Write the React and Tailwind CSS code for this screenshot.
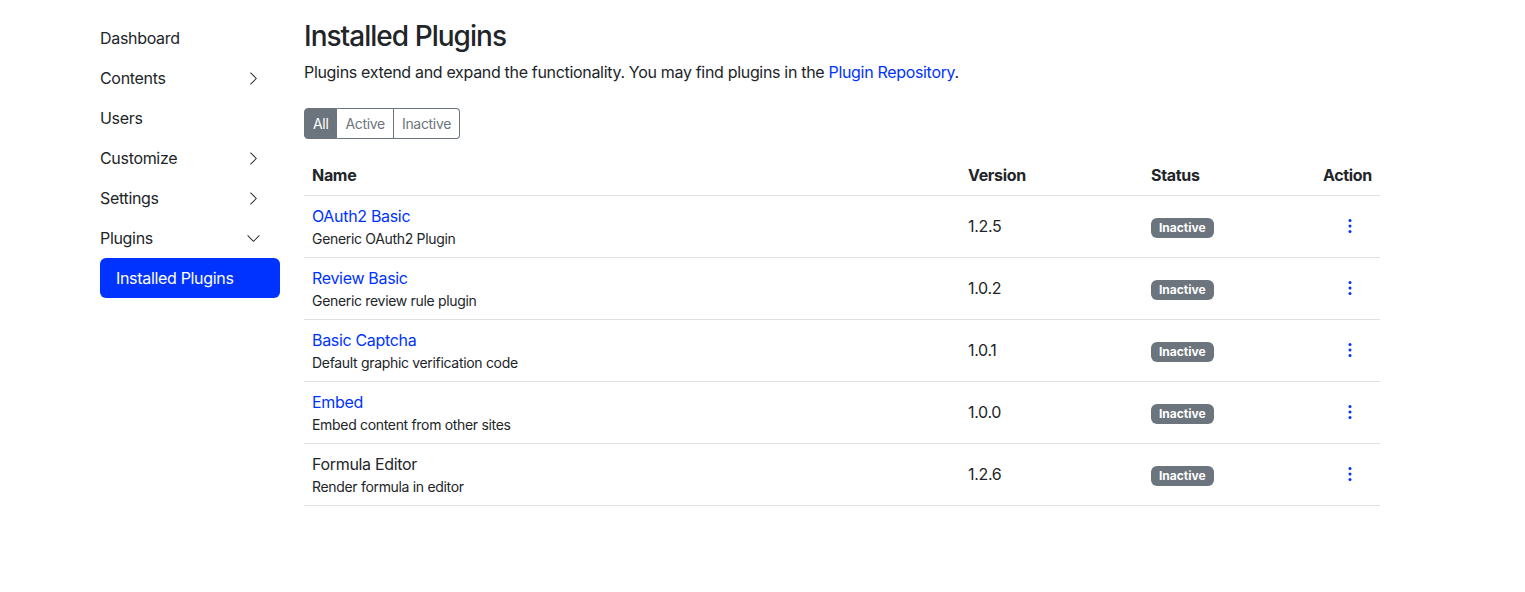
import React from 'react'

const NAV = [
  { label: 'Dashboard' },
  { label: 'Contents', chevron: 'right' },
  { label: 'Users' },
  { label: 'Customize', chevron: 'right' },
  { label: 'Settings', chevron: 'right' },
  { label: 'Plugins', chevron: 'down' },
]

const PLUGINS = [
  { name: 'OAuth2 Basic', desc: 'Generic OAuth2 Plugin', version: '1.2.5', link: true },
  { name: 'Review Basic', desc: 'Generic review rule plugin', version: '1.0.2', link: true },
  { name: 'Basic Captcha', desc: 'Default graphic verification code', version: '1.0.1', link: true },
  { name: 'Embed', desc: 'Embed content from other sites', version: '1.0.0', link: true },
  { name: 'Formula Editor', desc: 'Render formula in editor', version: '1.2.6', link: false },
]

function Chevron({ dir }) {
  return (
    <svg width="15" height="15" viewBox="0 0 16 16" fill="currentColor" className="text-[#212529]">
      {dir === 'right' ? (
        <path fillRule="evenodd" d="M4.646 1.646a.5.5 0 0 1 .708 0l6 6a.5.5 0 0 1 0 .708l-6 6a.5.5 0 0 1-.708-.708L10.293 8 4.646 2.354a.5.5 0 0 1 0-.708z" />
      ) : (
        <path fillRule="evenodd" d="M1.646 4.646a.5.5 0 0 1 .708 0L8 10.293l5.646-5.647a.5.5 0 0 1 .708.708l-6 6a.5.5 0 0 1-.708 0l-6-6a.5.5 0 0 1 0-.708z" />
      )}
    </svg>
  )
}

function Dots() {
  return (
    <svg width="16" height="16" viewBox="0 0 16 16" fill="#0033ff">
      <circle cx="8" cy="2.5" r="1.5" />
      <circle cx="8" cy="8" r="1.5" />
      <circle cx="8" cy="13.5" r="1.5" />
    </svg>
  )
}

function Sidebar() {
  return (
    <nav className="w-[180px] shrink-0 pt-[18px]">
      {NAV.map(n => (
        <div key={n.label} className="h-10 flex items-center justify-between pr-[19px] text-base text-[#212529]">
          <span>{n.label}</span>
          {n.chevron && <Chevron dir={n.chevron} />}
        </div>
      ))}
      <div className="h-10 flex items-center px-4 rounded-md bg-[#0033ff] text-white text-base">Installed Plugins</div>
    </nav>
  )
}

export default function App() {
  return (
    <div className="min-h-[592px] bg-white flex gap-6 pl-[100px] text-[#212529] tracking-[-0.02em]" style={{ fontFamily: 'Inter, "Noto Sans", sans-serif' }}>
      <Sidebar />
      <main className="w-[1076px] pt-[19px]">
        <h3 className="text-[28px] leading-[34px] font-medium tracking-[-0.035em] mb-[7px]">Installed Plugins</h3>
        <p className="text-base leading-6 mb-6">
          Plugins extend and expand the functionality. You may find plugins in the{' '}
          <a className="text-[#0033ff]">Plugin Repository</a>.
        </p>

        <div className="inline-flex mb-4 text-sm">
          <button className="h-[31px] px-2 bg-[#6c757d] text-white border border-[#6c757d] rounded-l">All</button>
          <button className="h-[31px] px-2 text-[#6c757d] border border-l-0 border-[#6c757d]">Active</button>
          <button className="h-[31px] px-2 text-[#6c757d] border border-l-0 border-[#6c757d] rounded-r">Inactive</button>
        </div>

        <table className="w-full border-collapse text-base">
          <thead>
            <tr className="border-b border-[#dee2e6]">
              <th className="text-left font-bold p-2 leading-6">Name</th>
              <th className="text-left font-bold p-2 leading-6 w-[183px]">Version</th>
              <th className="text-left font-bold p-2 leading-6 w-[160px]">Status</th>
              <th className="text-right font-bold p-2 leading-6 w-[77px]">Action</th>
            </tr>
          </thead>
          <tbody>
            {PLUGINS.map(p => (
              <tr key={p.name} className="border-b border-[#dee2e6]">
                <td className="p-2 align-middle">
                  <div className={`leading-6 ${p.link ? 'text-[#0033ff]' : ''}`}>{p.name}</div>
                  <div className="text-sm leading-[21px]">{p.desc}</div>
                </td>
                <td className="p-2 align-middle pb-[10px]">{p.version}</td>
                <td className="p-2 align-middle pb-[10px]">
                  <span className="inline-block bg-[#6c757d] text-white text-[12px] font-bold leading-none px-2 py-[4px] rounded-md tracking-normal">Inactive</span>
                </td>
                <td className="p-2 align-middle pb-[10px]">
                  <div className="flex justify-end pr-[14px]">
                    <Dots />
                  </div>
                </td>
              </tr>
            ))}
          </tbody>
        </table>
      </main>
    </div>
  )
}
